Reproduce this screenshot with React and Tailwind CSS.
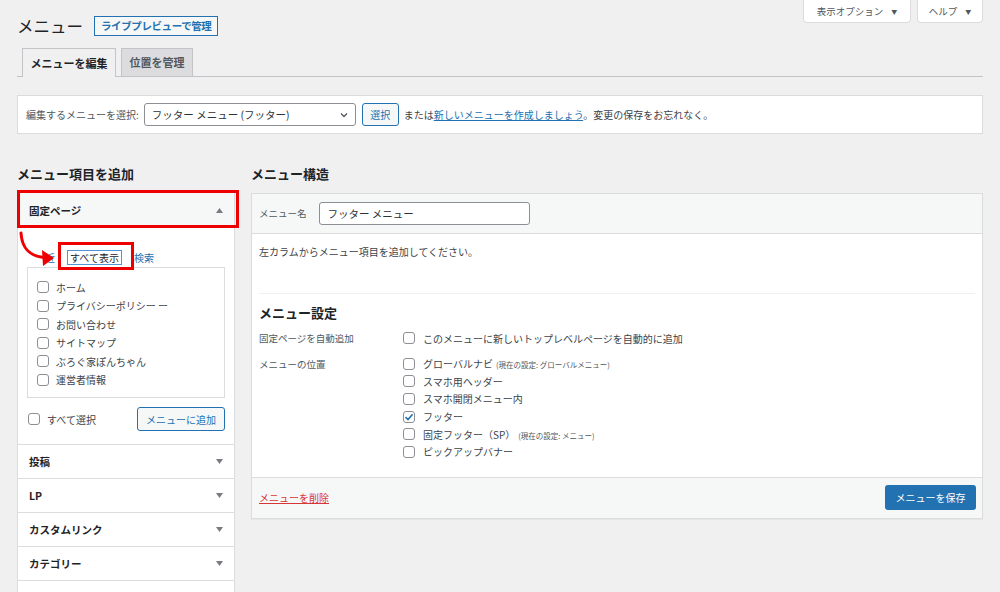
import React from 'react';

const font = { fontFamily: '"Noto Sans CJK JP", "Noto Sans", sans-serif' };

const Check = ({ checked }) => (
  <span className="w-[12px] h-[12px] border border-[#8c8f94] rounded-[3px] bg-white flex items-center justify-center shrink-0">
    {checked && (
      <svg width="10" height="10" viewBox="0 0 10 10">
        <polyline points="1.5,5.2 4,7.6 8.6,2.2" fill="none" stroke="#2271b1" strokeWidth="1.6" />
      </svg>
    )}
  </span>
);

const Tri = ({ up }) => (
  <svg width="7" height="5" viewBox="0 0 7 5">
    {up ? <polygon points="0,5 7,5 3.5,0" fill="#787c82" /> : <polygon points="0,0 7,0 3.5,5" fill="#787c82" />}
  </svg>
);

const pages = ['ホーム', 'プライバシーポリシー ー', 'お問い合わせ', 'サイトマップ', 'ぶろぐ家ぽんちゃん', '運営者情報'];
const closed = ['投稿', 'LP', 'カスタムリンク', 'カテゴリー', 'ブログパーツ'];

const App = () => {
  return (
    <div style={font} className="relative bg-[#f0f0f1] min-h-[592px] h-[592px] overflow-hidden px-[17px] text-[#3c434a]">
      {/* header */}
      <div className="flex justify-between items-start">
        <div className="flex items-center gap-[11px] pt-[15px]">
          <div className="text-[16.5px] leading-[22px] text-[#1d2327]">メニュー</div>
          <div className="h-[20px] px-[6px] flex items-center border border-[#2271b1] text-[#2271b1] text-[10.5px] font-semibold tracking-[-0.4px] bg-[#f6f7f7]">
            ライブプレビューで管理
          </div>
        </div>
        <div className="flex gap-[6px]">
          <div className="w-[108px] h-[23px] bg-white border border-t-0 border-[#dcdcde] rounded-b-[4px] flex items-center justify-center gap-[8px] text-[9.5px] text-[#50575e]">
            <span>表示オプション</span>
            <span className="text-[6px]">▼</span>
          </div>
          <div className="w-[66px] h-[23px] bg-white border border-t-0 border-[#dcdcde] rounded-b-[4px] flex items-center justify-center gap-[8px] text-[9.5px] text-[#50575e]">
            <span>ヘルプ</span>
            <span className="text-[6px]">▼</span>
          </div>
        </div>
      </div>

      {/* tabs */}
      <div className="mt-[11px] flex items-end gap-[5px] pl-[5px] border-b border-[#c3c4c7] h-[29px]">
        <div className="w-[94px] h-[29px] -mb-px border border-b-0 border-[#c3c4c7] bg-[#f0f0f1] flex items-center justify-center text-[11px] font-bold text-[#1d2327]">
          メニューを編集
        </div>
        <div className="w-[72px] h-[28px] border border-b-0 border-[#c3c4c7] bg-[#dcdcde] flex items-center justify-center text-[11px] font-bold text-[#50575e]">
          位置を管理
        </div>
      </div>

      {/* select menu */}
      <div className="mt-[18px] h-[39px] bg-white border border-[#dcdcde] flex items-center pl-[8px] text-[10px]">
        <span className="text-[#50575e]">編集するメニューを選択:</span>
        <div className="ml-[5px] w-[212px] h-[23px] border border-[#8c8f94] rounded-[3px] flex items-center justify-between pl-[7px] pr-[6px] text-[10.5px] text-[#2c3338]">
          <span>フッター メニュー (フッター)</span>
          <svg width="10" height="10" viewBox="0 0 10 10">
            <polyline points="2,3.5 5,6.5 8,3.5" fill="none" stroke="#50575e" strokeWidth="1.3" />
          </svg>
        </div>
        <div className="ml-[6px] w-[37px] h-[23px] border border-[#2271b1] rounded-[3px] bg-[#f6f7f7] text-[#2271b1] flex items-center justify-center">
          選択
        </div>
        <span className="ml-[5px] text-[#3c434a]">
          または<span className="text-[#2271b1] underline">新しいメニューを作成しましょう</span>。変更の保存をお忘れなく。
        </span>
      </div>

      {/* columns */}
      <div className="mt-[31px] flex gap-[16px] items-start">
        {/* left */}
        <div className="w-[218px] shrink-0">
          <div className="h-[18px] leading-[18px] text-[13px] font-bold text-[#1d2327]">メニュー項目を追加</div>
          <div className="mt-[9px] bg-white border border-[#dcdcde]">
            <div className="h-[35px] bg-[#f6f7f7] flex items-center justify-between pl-[11px] pr-[11px] text-[10.5px] font-bold text-[#1d2327]">
              <span>固定ページ</span>
              <Tri up />
            </div>
            <div className="px-[9px] pt-[21px] pb-[13px]">
              <div className="h-[16px] flex items-center text-[10px]">
                <span className="ml-[8px] text-[#2271b1]">最近</span>
                <span className="ml-[12px] px-[2px] leading-[13px] border border-[#4f94d4] text-[#1d2327]">すべて表示</span>
                <span className="ml-[12px] text-[#2271b1]">検索</span>
              </div>
              <div className="mt-[2px] h-[131px] border border-[#dcdcde] pt-[10px] pl-[9px]">
                {pages.map((p) => (
                  <div key={p} className="h-[18.5px] flex items-center gap-[7px] text-[10px] text-[#3c434a]">
                    <Check />
                    <span>{p}</span>
                  </div>
                ))}
              </div>
              <div className="mt-[9px] h-[24px] flex items-center justify-between">
                <div className="flex items-center gap-[7px] text-[10px] pl-[1px]">
                  <Check />
                  <span>すべて選択</span>
                </div>
                <div className="w-[88px] h-[24px] border border-[#2271b1] rounded-[3px] bg-[#f6f7f7] text-[#2271b1] text-[10px] flex items-center justify-center">
                  メニューに追加
                </div>
              </div>
            </div>
            {closed.map((c) => (
              <div key={c} className="h-[34px] border-t border-[#dcdcde] flex items-center justify-between pl-[11px] pr-[11px] text-[10.5px] font-bold text-[#1d2327]">
                <span>{c}</span>
                <Tri />
              </div>
            ))}
          </div>
        </div>

        {/* right */}
        <div className="flex-1">
          <div className="h-[18px] leading-[18px] text-[13px] font-bold text-[#1d2327]">メニュー構造</div>
          <div className="mt-[10px] bg-white border border-[#dcdcde] shadow-[0_1px_1px_rgba(0,0,0,0.04)]">
            <div className="h-[40px] bg-[#f6f7f7] border-b border-[#dcdcde] flex items-center pl-[7px] text-[9.5px] text-[#50575e]">
              <span>メニュー名</span>
              <div className="ml-[12px] w-[211px] h-[23px] bg-white border border-[#8c8f94] rounded-[3px] flex items-center pl-[8px] text-[10.5px] text-[#2c3338]">
                フッター メニュー
              </div>
            </div>
            <div className="px-[7px] pt-[11px] pb-[16px]">
              <div className="leading-[14px] text-[10px] text-[#3c434a]">左カラムからメニュー項目を追加してください。</div>
              <div className="mt-[34px] h-px bg-[#f0f0f1]" />
              <div className="mt-[10px] h-[18px] leading-[18px] text-[13px] font-bold text-[#1d2327]">メニュー設定</div>
              <div className="mt-[9px] flex h-[14px] items-center">
                <div className="w-[144px] text-[9.5px] text-[#50575e]">固定ページを自動追加</div>
                <div className="flex items-center gap-[8px] text-[10px] text-[#3c434a]">
                  <Check />
                  <span>このメニューに新しいトップレベルページを自動的に追加</span>
                </div>
              </div>
              <div className="mt-[10px] flex items-start">
                <div className="w-[144px] h-[17.6px] flex items-center text-[9.5px] text-[#50575e]">メニューの位置</div>
                <div>
                  {[
                    ['グローバルナビ', '(現在の設定: グローバルメニュー)', false],
                    ['スマホ用ヘッダー', '', false],
                    ['スマホ開閉メニュー内', '', false],
                    ['フッター', '', true],
                    ['固定フッター（SP）', '(現在の設定: メニュー)', false],
                    ['ピックアップバナー', '', false],
                  ].map(([t, n, c]) => (
                    <div key={t} className="h-[17.6px] flex items-center gap-[8px] text-[10px] text-[#3c434a]">
                      <Check checked={c} />
                      <span>
                        {t}
                        {n && <span className="ml-[3px] text-[7.5px] text-[#50575e]">{n}</span>}
                      </span>
                    </div>
                  ))}
                </div>
              </div>
            </div>
            <div className="h-[41px] bg-[#f6f7f7] border-t border-[#dcdcde] flex items-center justify-between pl-[7px] pr-[6px]">
              <span className="text-[10px] text-[#d63638] underline">メニューを削除</span>
              <div className="w-[91px] h-[25px] bg-[#2271b1] rounded-[3px] text-white text-[10px] flex items-center justify-center">
                メニューを保存
              </div>
            </div>
          </div>
        </div>
      </div>

      {/* annotations */}
      <div className="absolute left-[17px] top-[190px] w-[222px] h-[38px] border-[3px] border-[#ee0000]" />
      <div className="absolute left-[58px] top-[242px] w-[76px] h-[28px] border-[3px] border-[#ee0000]" />
      <svg className="absolute left-0 top-0" width="70" height="280" viewBox="0 0 70 280">
        <path d="M21 233 C 22 249, 30 256, 44 257.5" fill="none" stroke="#ffffff" strokeWidth="6" />
        <rect x="30" y="248" width="15" height="19" fill="#ffffff" />
        <path d="M21 233 C 22 249, 30 256, 44 257.5" fill="none" stroke="#ee0000" strokeWidth="3" strokeLinecap="round" />
        <polygon points="54,258 42,250 43,266" fill="#ee0000" />
      </svg>
    </div>
  );
};

export default App;
